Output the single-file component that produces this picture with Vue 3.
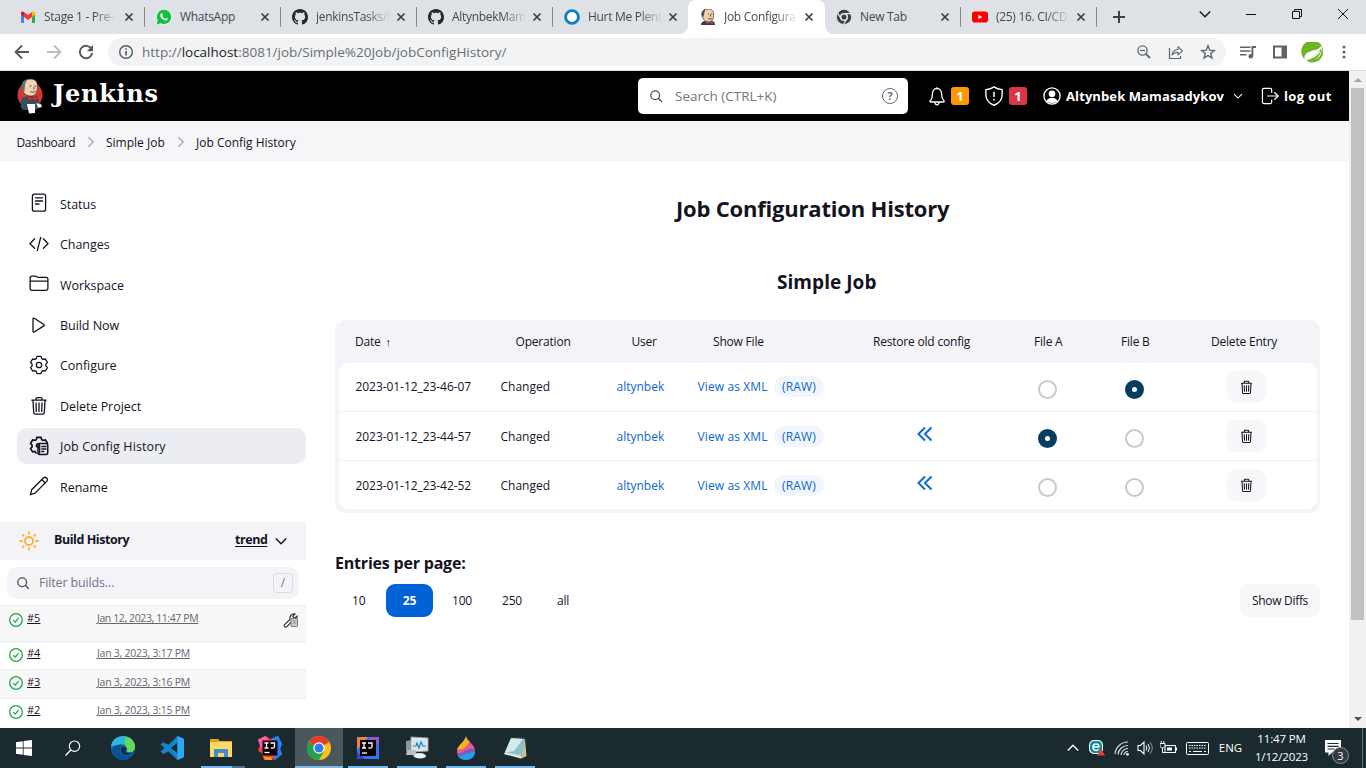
<script setup>
const icons = {
  gmail: '<path d="M1 4v9.2c0 .5.4.8.8.8H4V7z" fill="#4285f4"/><path d="M12 7v7h2.200c.4 0 .8-.3.8-.8V4z" fill="#34a853"/><path d="M4 3v5l4 3 4-3V3L8 6z" fill="#ea4335"/><path d="M1 4v1.500L4 8V3C2.500 2 1 2.500 1 4" fill="#c5221f"/><path d="M12 3v5l3-2.500V4c0-1.500-1.500-2-3-1" fill="#fbbc04"/>',
  whatsapp: '<circle cx="8" cy="8" r="7.800" fill="#fff"/><path d="M.7 15.500l1-4A7.200 7.200 0 1 1 4.600 14.300z" fill="#12c143"/><path d="M5.300 4.200c.7-.5 1 0 1.500 1.500.1.500-.8.900-.6 1.300.6 1.200 1.500 2.100 2.800 2.700.5.200.8-1 1.300-.8 1.800.8 1.700.9 1.300 1.700-1 1.600-3 1.200-5.300-.8C4 8 3.500 5.600 5.300 4.200" fill="#fff"/>',
  github: '<path fill="#24292f" d="M8 0C3.580 0 0 3.580 0 8c0 3.540 2.290 6.530 5.470 7.590.4.070.55-.17.55-.38 0-.19-.01-.82-.01-1.490-2.010.37-2.530-.49-2.690-.94-.09-.23-.48-.94-.82-1.130-.28-.15-.68-.52-.01-.53.63-.01 1.080.58 1.230.82.72 1.210 1.870.87 2.330.66.07-.52.28-.87.51-1.070-1.780-.2-3.640-.89-3.640-3.950 0-.87.31-1.590.82-2.150-.08-.2-.36-1.020.08-2.120 0 0 .67-.21 2.200.82.64-.18 1.320-.27 2-.27s1.360.09 2 .27c1.530-1.040 2.200-.82 2.200-.82.44 1.100.16 1.920.08 2.120.51.56.82 1.270.82 2.150 0 3.070-1.870 3.750-3.650 3.950.29.25.54.73.54 1.480 0 1.070-.01 1.930-.01 2.200 0 .21.15.46.55.38A8 8 0 0 0 16 8c0-4.420-3.580-8-8-8"/>',
  ring: '<circle cx="8" cy="8" r="6.400" fill="#fff" stroke="#0b80c3" stroke-width="2.900"/>',
  butler: '<path d="M1 16c0-3 2-4 5-4h6c2 0 3 2 3 4z" fill="#2d3f55"/><path d="M2 7C1 2 4 0 8 0s6 2 5.500 6.500C13.500 10 12 13 9 13c-4 0-6-3-7-6" fill="#ecd0ae" stroke="#504238" stroke-width=".8"/><path d="M2 7C.8 3 3 .4 6 .5 4 2 4.500 5 3.500 8" fill="#5b534b"/><path d="M8 5h1m2 0h1M8 9.500c2 .8 3 .5 4 0M10.500 5.500v2" stroke="#4b3a30" stroke-width=".9" fill="none"/><path d="M6 12l3 1.500 4-1.500v3l-4-1-3 1z" fill="#d33833"/>',
  chromegray: '<circle cx="8" cy="8" r="7.200" fill="#3c4043"/><circle cx="8" cy="8" r="3.300" fill="#3c4043" stroke="#e8eaed" stroke-width="1.500"/><path d="M8 4.700h6.700M5 9.700L1.800 4.300M10.800 9.700L7.700 15" stroke="#e8eaed" stroke-width="1.200"/>',
  youtube: '<rect x="0" y="2.500" width="16" height="11" rx="2.800" fill="#f00"/><path d="M6.400 5.700v4.600l4-2.300z" fill="#fff"/>',
  x: '<path d="M4.500 4.500l7 7m0-7l-7 7" stroke="#3c4043" stroke-width="1.700"/>',
  plus: '<path d="M8 2v12M2 8h12" stroke="#3c4043" stroke-width="2"/>',
  back: '<path d="M15 8H2M8 1.500L1.500 8 8 14.500" fill="none" stroke="#55585d" stroke-width="1.800"/>',
  fwd: '<path d="M1 8h13M8 1.500L14.500 8 8 14.500" fill="none" stroke="#babcbe" stroke-width="1.800"/>',
  reload: '<path d="M13.600 5.200A6.200 6.200 0 1 0 14.200 9" fill="none" stroke="#55585d" stroke-width="1.900"/><path d="M15 1v6.200H8.800z" fill="#55585d"/>',
  info: '<circle cx="8" cy="8" r="6.300" fill="none" stroke="#55585d" stroke-width="1.400"/><path d="M8 7v4.500M8 4.200v1.600" stroke="#55585d" stroke-width="1.600"/>',
  zoomout: '<circle cx="6.500" cy="6.500" r="4.600" fill="none" stroke="#5f6368" stroke-width="1.300"/><path d="M10 10l4 4" stroke="#5f6368" stroke-width="1.800"/><path d="M4 6.500h5" stroke="#5f6368" stroke-width="1.200"/>',
  share: '<path d="M1.500 4v10.500h11V12" fill="none" stroke="#5f6368" stroke-width="1.200"/><path d="M4 11c.5-3.500 2.500-5.200 6-5.500V2.700l4.500 4.200-4.500 4V8.200C7.500 8.200 5.500 9 4 11z" fill="none" stroke="#5f6368" stroke-width="1.100" stroke-linejoin="round"/>',
  star: '<path d="M8 1.800l1.700 4.400 4.500.3-3.500 2.900 1.200 4.500L8 11.500l-3.900 2.400 1.200-4.500L1.800 6.500l4.500-.3z" fill="none" stroke="#5f6368" stroke-width="1.400"/>',
  queue: '<path d="M0 3.200h10.500M0 7h10.500M0 10.800h6.500" stroke="#5f6368" stroke-width="1.600"/><path d="M12.400 12V3H16" fill="none" stroke="#5f6368" stroke-width="1.900"/><circle cx="10.800" cy="12.200" r="2.300" fill="#5f6368"/>',
  panel: '<path d="M1 1.500h14v13H1z" fill="#5f6368"/><path d="M3 3.500h6.500v9H3z" fill="#fff"/>',
  spring: '<path d="M14.700 2.200A8 8 0 1 0 15.900 9C16.200 6 15.800 4 14.700 2.200" fill="#6db521"/><path d="M14.800 2.500c-2 4-7 3-10.500 5.500C2 10 2 12 3.500 13.400c6 .8 13-1.400 11.300-10.900" fill="#fff"/><path d="M3 12.500C8 12 12 9 14.700 4.500 15 11 9 14.500 4.500 13.700z" fill="#6db521"/><path d="M3 13C8.500 12 11.500 10 13.800 7" stroke="#fff" stroke-width=".8" fill="none"/>',
  dots: '<g fill="#5f6368"><circle cx="8" cy="3" r="1.500"/><circle cx="8" cy="8" r="1.500"/><circle cx="8" cy="13" r="1.500"/></g>',
  down: '<path d="M2.800 5.500L8 10.700l5.200-5.200" fill="none" stroke="currentColor" stroke-width="1.400"/>',
  right: '<path d="M5 2.500L10.500 8 5 13.500" fill="none" stroke="#a8a8b8" stroke-width="1.500"/>',
  min: '<path d="M3 8.500h10" stroke="#111" stroke-width="1"/>',
  restore: '<path d="M3.500 5.500h7v7h-7zM5.500 5.500v-2h7v7h-2" fill="none" stroke="#111"/>',
  close: '<path d="M3 3l10 10m0-10L3 13" stroke="#111"/>',
  search: '<circle cx="7.200" cy="7.200" r="4.400" fill="none" stroke="#4d4d5c" stroke-width="1.300"/><path d="M10.500 10.500l3 3" stroke="#4d4d5c" stroke-width="1.400" stroke-linecap="round"/>',
  bell: '<path d="M3 11.500c.8-1 1.300-1.800 1.300-5C4.300 3.800 5.700 2 8 2s3.700 1.800 3.700 4.500c0 3.200.5 4 1.800 5.200.5.600.2 1.100-.5 1.100H3c-.8 0-1-.6 0-1.300zM6.200 13c.2 1.500 1 2 1.800 2s1.600-.5 1.800-2M8 1v1" fill="none" stroke="#fff" stroke-width="1.050"/>',
  shield: '<path d="M8 .7C6 2.200 4.300 2.700 1.500 2.900V7c0 4 2.200 6.700 6.500 8.400 4.300-1.700 6.500-4.400 6.500-8.400V2.900C11.700 2.700 10 2.200 8 .7z" fill="none" stroke="#fff" stroke-width="1.100"/><path d="M8 4.500v4.200m0 1.500v1.400" stroke="#fff" stroke-width="1.200"/>',
  user: '<circle cx="8" cy="8" r="7.200" fill="#000" stroke="#fff" stroke-width="1.200"/><circle cx="8" cy="6" r="3" fill="#fff"/><path d="M3 12.500c1-2.300 3-2.700 5-2.700s4 .4 5 2.700C10.500 15 5.500 15 3 12.500" fill="#fff"/>',
  logout: '<path d="M9.500 5V2.600c0-.8-.4-1.300-1.200-1.300H2.500c-.8 0-1.200.5-1.200 1.300v10.800c0 .8.4 1.300 1.200 1.300h5.800c.8 0 1.200-.5 1.200-1.300V11M5.500 8H15m-3.200-3.300L15.200 8l-3.400 3.300" fill="none" stroke="#fff" stroke-width="1.100" stroke-linejoin="round"/>',
  status: '<rect x="3.400" y="1.200" width="13.200" height="17" rx="2"/><path d="M6.500 4.800h7M6.500 8h7M6.500 11h3.500"/>',
  code: '<path d="M5.600 4.800L1 9.700l4.600 4.600M14.400 4.800L19 9.700l-4.600 4.600M11.700 3.300L8.300 16.500"/>',
  folder: '<path d="M1.100 14.500V4.100c0-1.200.6-1.900 1.800-1.900h3.300c.7 0 1 .2 1.500.6.6.5 1 .6 1.700.6h7.800c1.100 0 1.700.6 1.700 1.700v9.400c0 1.200-.6 1.800-1.800 1.800H3c-1.200 0-1.900-.6-1.900-1.800zM1.300 7.100h17.500"/>',
  play: '<path d="M4 4v12.300c0 .8.700 1.100 1.300.7l9.500-6.100c.6-.4.6-1 0-1.400L5.300 3.300C4.700 2.900 4 3.200 4 4z"/>',
  gear: '<path d="M8 1.400h4l.8 2.200 1.300.8 2.300-.4 2 3.400-1.500 1.800v1.600l1.500 1.800-2 3.400-2.300-.4-1.300.8-.8 2.200H8l-.8-2.200-1.300-.8-2.300.4-2-3.400 1.500-1.800V9.200L1.600 7.400l2-3.400 2.300.4 1.300-.8z" stroke-linejoin="round"/><circle cx="10" cy="10" r="2.700"/>',
  trash: '<path d="M2.800 4.200h14.400M7 4V2.600c0-.6.400-1 1-1h4c.6 0 1 .4 1 1V4M4 4.400l.7 12.200c.1 1 .7 1.500 1.500 1.500h7.600c.8 0 1.400-.5 1.500-1.500L16 4.400M7 7l.3 8.500M10 7v8.500M13 7l-.3 8.500"/>',
  confhist: '<path d="M7 17l-1-1.500-2.400.4-2-3.300 1.500-1.800V9.200L1.600 7.400l2-3.400 2.300.4 1.300-.8L8 1.400h4l.8 2.200 1.300.8 2.300-.4 2 3" stroke-width="1.700"/><rect x="9" y="7.500" width="9.700" height="11" rx="1.500" stroke-width="1.600"/><path d="M10.600 17V9.300c0-2.300-3.300-2-3.300.2 0 1.400 1.200 1.700 2 1.500M12.800 10.500h4M12.800 13h4M12.800 15.500h2" stroke-width="1.400"/>',
  pencil: '<path d="M1.500 18.500l1.200-4.800L14.400 2c2.300-2 5.200.9 3.300 3.400L6 17.200zM12.800 3.500l3.500 3.500"/>',
  sun: '<circle cx="10" cy="10" r="4"/><path d="M10 .5v3m0 13v3M.5 10h3m13 0h3M3.300 3.300l2 2m9.400 9.400l2 2m0-13.400l-2 2m-9.400 9.400l-2 2"/>',
  check: '<circle cx="8" cy="8" r="6.300" fill="none" stroke="#1ea64b" stroke-width="1.300"/><path d="M5.400 8.200l1.900 1.900 3.300-4" fill="none" stroke="#1ea64b" stroke-width="1.300"/>',
  wrench: '<path d="M1.500 14.500c-1-1 0-2 .8-2.600L7 7.500C6.300 4 8.500 1.500 12 2L9.800 4.300l1.700 1.900 2.500-2c.5 3-1.700 5.200-4.700 4.800l-5.200 5.400c-.8.900-1.800 1-2.600.1z" fill="#fff" stroke="#333" stroke-width="1.200"/><rect x="8" y="6.500" width="6.500" height="8" rx="1" fill="#ccc" stroke="#777"/><path d="M9.800 9h3M9.800 11h3" stroke="#777" stroke-width=".8"/>',
  rewind: '<path d="M8 1.500L1.500 8 8 14.500M14.500 1.500L8 8l6.500 6.500" fill="none" stroke="#0b6bdb" stroke-width="2"/>',
  win: '<path d="M0 2.200L6.800 1.200v6.400H0zM7.600 1.100L16 0v7.600H7.600zM0 8.400h6.800v6.400L0 13.800zM7.600 8.400H16V16l-8.400-1.100z" fill="#fff"/>',
  tsearch: '<circle cx="9.500" cy="6.200" r="5.200" fill="none" stroke="#fff" stroke-width="1.200"/><path d="M5.800 10L.5 15.500" stroke="#fff" stroke-width="1.300"/>',
  edge: '<circle cx="12" cy="12" r="12" fill="#0c61ad"/><path d="M0 11C1-3 23-4 24 11c0 5-5 6.500-8.500 4.300 2-2.300.5-6.800-4-6.800C6 8.500 1 10 0 11" fill="#2bbbd8"/><path d="M15 .4C21 2 24 6 24 11c0 4.500-4.500 6-8 4.500 1-2 0-4.500-1.500-5.500C13 7 14 3 15 .4" fill="#64d959"/><path d="M9 12c-2 6 4 10 12 7C15 27 3 25 1.500 15 2 10 7 8 11 9c-1 .7-1.500 1.500-2 3" fill="#0a4f98"/><path d="M10 13c0-3 5-3 5.300 0 0 1.500-1.300 2-.8 3 1.200 1.400 5 1.600 7.500.2-2 3.300-12 4.800-12-3.200" fill="#1b2a2f"/>',
  vscode: '<path fill-rule="evenodd" d="M17.500 0L24 3v18l-6.500 3L8.500 15.500 3.200 18 .4 15.400 4.500 12 .4 8.500 3.200 6.200 8.500 8.800zM17.500 6.700L11 12l6.500 5.300z" fill="#1585ca"/><path d="M17.500 0L24 3v18l-6.500 3z" fill="#2ba9f5"/>',
  explorer: '<path d="M1 3h8l2 2h12v16H1z" fill="#e3a21a"/><rect x="1" y="6" width="22" height="15" fill="#ffd765"/><path d="M5 21v-8h14v8h-4v-4h-6v4z" fill="#3f8fd0"/>',
  ij: '<path d="M0 3L8 0 12 3l8-3 4 8-2 5 2 5-7 6-5-3-6 3-2-7-4-2 2-6z" fill="#f1433f"/><path d="M13 3l7-3 4 8-2 5 2 5-7 6z" fill="#1587ff"/><path d="M3 15l4 6 6 0 2 3-8 0z" fill="#ff9419"/><path d="M0 4l7-4 3 3-7 9z" fill="#fc5fa3"/><rect x="4.500" y="4.500" width="15" height="15" fill="#0a0006"/><path d="M6.500 7h4m-2 0v5m-2 0h4M12.500 7h4v3.700c0 1.500-2.300 1.800-3.500.7" fill="none" stroke="#fff" stroke-width="1.300"/><path d="M6.500 16.500h5" stroke="#fff" stroke-width="1.300"/>',
  chrome: '<circle cx="12" cy="12" r="12" fill="#fbc116"/><path d="M12 12L1.600 6A12 12 0 0 1 22.400 6z" fill="#e33b2e"/><path d="M1.600 6A12 12 0 0 0 12 24l5.200-9L12 12z" fill="#27a04b"/><circle cx="12" cy="12" r="5.700" fill="#fff"/><circle cx="12" cy="12" r="4.500" fill="#317bf0"/>',
  ij2: '<rect x="1" y="1" width="22" height="22" fill="#2f75ee"/><path d="M1 1h11L1 14z" fill="#f2803c"/><path d="M12 1h11v8z" fill="#a051d8"/><path d="M1 6v10l8 7H1z" fill="#3b43c9"/><rect x="4" y="4" width="16" height="16" fill="#0a0006"/><path d="M6 7h4m-2 0v5m-2 0h4M12 7h4v3.700c0 1.500-2.300 1.800-3.500.7" fill="none" stroke="#fff" stroke-width="1.300"/><path d="M6 17h5" stroke="#fff" stroke-width="1.300"/>',
  monitor: '<path d="M1 5l6-1v12l-6-1z" fill="#8d9699"/><path d="M6 1l17 1v13l-17 1z" fill="#e8eaea" stroke="#9aa2a6"/><path d="M8 3.500l13 .5v9l-13 .7z" fill="#cfe5f2"/><path d="M8 10h3l1-3 2 5 2-6 2 4h3" fill="none" stroke="#2783be" stroke-width="1.200"/><path d="M2 14h9v3h7l2 4H9l-1-2H1z" fill="#b9bfc2"/><ellipse cx="15" cy="20" rx="6" ry="2.500" fill="#f0f1f1"/>',
  drop: '<path d="M12 0c1 6 9 9 9 16 0 11-18 11-18 0C3 9 10 7 12 0" fill="#6e57bd"/><path d="M12 0c-2 7-8 9-9 14 6 3 11-5 13-8-2-2-4-4-4-6" fill="#f9b219"/><path d="M3.300 13c6 2 10-3 12-7.200 3 2 5 5 5.500 8C15 13 12 19 3 17z" fill="#f1568f"/><path d="M3.200 17.500c3 .8 6-2 9-3.500 3-1.500 6-1.500 8.700-.2.100.7.100 1.500.1 2.200-5 0-9 4-16.500 4.500-.7-.9-1.100-1.900-1.300-3" fill="#7a5cc4"/><path d="M4 20c6 0 11-4.500 17-4-1 8.500-12 10-17 4" fill="#20a0e8"/>',
  notepad: '<path d="M22 3l1.500 17-4 2-2-4z" fill="#cdbf95"/><path d="M8 2l14 1-4 18-17-3z" fill="#8cc0cb"/><path d="M8 2l12 1-9 12-9 1.500z" fill="#d3ebef"/><path d="M1 18l2-1.500 15 3 1.500 2.500-2 .5z" fill="#e9e6d8"/><path d="M8 2h14" stroke="#667" stroke-dasharray="1 1"/>',
  eset: '<rect x="0" y="0" width="14" height="14" rx="5" fill="#fff"/><rect x="1" y="1" width="12" height="12" rx="4.500" fill="#0b8c96"/><path d="M4 7h6c0-4-6-4-6 0s4 4 5.500 2.300" fill="none" stroke="#fff" stroke-width="1.500"/><path d="M12 8.500l4 7H8z" fill="#e83b3b"/>',
  wifi: '<g fill="none" stroke="#d7dcdd" stroke-width="1.200"><path d="M1 14A13 13 0 0 1 14 2M4 14.500A10 10 0 0 1 14 5.500M7 15a7 7 0 0 1 7-6.500M10 15a4 4 0 0 1 4-3.500"/></g><circle cx="13.500" cy="14.300" r="1.400" fill="#fff"/>',
  speaker: '<path d="M1 5.500h2.500L7 2v12l-3.500-3.500H1z" fill="none" stroke="#fff" stroke-width="1.100"/><path d="M9 5.500q1.700 2.500 0 5M11 3.800q3 4.200 0 8.400" fill="none" stroke="#fff"/><path d="M13.200 2q4.200 6 0 12" fill="none" stroke="#899398"/>',
  battery: '<path d="M5 5.500h10.500v7H5zM16.500 7.500v3" fill="none" stroke="#fff" stroke-width="1.100"/><rect x="7" y="7.500" width="5" height="3" fill="#fff"/><path d="M0 3.500h5V6c0 2.500-5 2.500-5 0zM1.200 1v2.500M3.800 1v2.500M2.500 8v4.500H5" fill="#1b2a2f" stroke="#fff"/>',
  keyboard: '<rect x=".5" y="2.500" width="22" height="12" rx="1" fill="none" stroke="#fff"/><path d="M3 5.500h17M3 8h17" stroke="#fff" stroke-dasharray="1.500 1" stroke-width="1.200"/><path d="M3 11.500h2m2 0h9m2 0h2" stroke="#fff" stroke-width="1.200"/>',
  note: '<path d="M0 0h16v12.500H7L3.500 16v-3.500H0z" fill="#fff"/><path d="M2.500 3.500h11M2.500 6.300h11M2.500 9h7" stroke="#1b2a2f" stroke-width="1.200"/>',
}
const tabs = [
  ['gmail', 'Stage 1 - Pre-'],
  ['whatsapp', 'WhatsApp'],
  ['github', 'jenkinsTasks/b'],
  ['github', 'AltynbekMam'],
  ['ring', 'Hurt Me Plent'],
  ['butler', 'Job Configura'],
  ['chromegray', 'New Tab'],
  ['youtube', '(25) 16. CI/CD'],
].map(([icon, label], i) => ({ icon, label, active: i === 5, line: i !== 4 && i !== 5, fade: i !== 1 && i !== 6 }))
const menu = [
  ['status', 'Status'], ['code', 'Changes'], ['folder', 'Workspace'], ['play', 'Build Now'],
  ['gear', 'Configure'], ['trash', 'Delete Project'], ['confhist', 'Job Config History'], ['pencil', 'Rename'],
]
const builds = [
  ['#5', 'Jan 12, 2023, 11:47 PM'], ['#4', 'Jan 3, 2023, 3:17 PM'],
  ['#3', 'Jan 3, 2023, 3:16 PM'], ['#2', 'Jan 3, 2023, 3:15 PM'],
]
const rows = [
  { date: '2023-01-12_23-46-07', restore: false, a: false, b: true },
  { date: '2023-01-12_23-44-57', restore: true, a: true, b: false },
  { date: '2023-01-12_23-42-52', restore: true, a: false, b: false },
]
const heads = ['Date', 'Operation', 'User', 'Show File', 'Restore old config', 'File A', 'File B', 'Delete Entry']
const apps = [
  ['win', 'small'], ['tsearch', 'small'], ['edge', ''], ['vscode', ''], ['explorer', 'open multi'], ['ij', ''],
  ['chrome', 'current'], ['ij2', 'open'], ['monitor', 'open'], ['drop', 'open'], ['notepad', 'open'],
]
</script>

<template>
  <div class="screen">
    <div class="tabstrip">
      <div v-for="t in tabs" :key="t.label" class="tab" :class="{ active: t.active, line: t.line }">
        <svg class="i16" viewBox="0 0 16 16" v-html="icons[t.icon]" />
        <span class="tab-label" :class="{ fade: t.fade }">{{ t.label }}</span>
        <svg class="i16" viewBox="0 0 16 16" v-html="icons.x" />
      </div>
      <svg class="i16 plus" viewBox="0 0 16 16" v-html="icons.plus" />
      <div class="winctl">
        <svg class="i16" viewBox="0 0 16 16" v-html="icons.down" />
        <svg class="i16" viewBox="0 0 16 16" v-html="icons.min" />
        <svg class="i16" viewBox="0 0 16 16" v-html="icons.restore" />
        <svg class="i16" viewBox="0 0 16 16" v-html="icons.close" />
      </div>
    </div>

    <div class="toolbar">
      <svg class="i16" viewBox="0 0 16 16" v-html="icons.back" />
      <svg class="i16" viewBox="0 0 16 16" v-html="icons.fwd" />
      <svg class="i16" viewBox="0 0 16 16" v-html="icons.reload" />
      <div class="omnibox">
        <svg class="i16" viewBox="0 0 16 16" v-html="icons.info" />
        <span class="url">http://<b>localhost</b>:8081/job/Simple%20Job/jobConfigHistory/</span>
        <svg class="i16" viewBox="0 0 16 16" v-html="icons.zoomout" />
        <svg class="i16" viewBox="0 0 16 16" v-html="icons.share" />
        <svg class="i16" viewBox="0 0 16 16" v-html="icons.star" />
      </div>
      <div class="exts">
        <svg class="i16" viewBox="0 0 16 16" v-html="icons.queue" />
        <svg class="i16" viewBox="0 0 16 16" v-html="icons.panel" />
        <svg class="i22" viewBox="0 0 16 16" v-html="icons.spring" />
        <svg class="i16" viewBox="0 0 16 16" v-html="icons.dots" />
      </div>
    </div>

    <div class="viewport">
      <div class="page">
        <header class="head">
          <svg class="mascot" viewBox="0 0 26 36">
            <ellipse cx="13" cy="17" rx="12.500" ry="13" fill="#d33833" />
            <path d="M4 30c0-5-1-9 3-11l7-1 7 2 2 9-4 3H6z" fill="#335061" />
            <path d="M5 11C4 4.500 8 1 13.500 1c5.500 0 7.500 4 7 8.500-.3 5.500-3 8.500-6 8.500-5 0-8.500-2.500-9.500-7" fill="#f0d6b7" stroke="#49372d" stroke-width=".7" />
            <path d="M5 13C3 6 6 1.500 11 1.500 8 3 8 8 7.500 14z" fill="#6d6b6d" />
            <path d="M12.500 8h2m3 0h2M13 13.500c2 1 4 .8 5.500-.2M17 9v2.500" stroke="#49372d" stroke-width=".9" fill="none" />
            <path d="M11 18l4 2 5-2v5l-5-2-4 2z" fill="#d33833" stroke="#81140f" stroke-width=".5" />
            <path d="M10 26l8 0 0 9-6 .5z" fill="#fff" /><path d="M19 25l5 1 1 3-4 1z" fill="#fff" stroke="#555" stroke-width=".4" />
          </svg>
          <span class="brand">Jenkins</span>
          <div class="search">
            <svg class="i16" viewBox="0 0 16 16" v-html="icons.search" />
            <span>Search (CTRL+K)</span>
            <i class="help">?</i>
          </div>
          <div class="account">
            <svg class="bell" viewBox="0 0 16 16" v-html="icons.bell" />
            <em class="badge amber">1</em>
            <svg class="shield" viewBox="0 0 16 16" v-html="icons.shield" />
            <em class="badge red">1</em>
            <svg class="person" viewBox="0 0 16 16" v-html="icons.user" />
            <strong class="uname">Altynbek Mamasadykov</strong>
            <svg class="caret" viewBox="0 0 16 16" v-html="icons.down" />
            <svg class="exit" viewBox="0 0 16 16" v-html="icons.logout" />
            <strong class="out">log out</strong>
          </div>
        </header>

        <nav class="crumbs">
          <span class="c1">Dashboard</span>
          <svg class="i14" viewBox="0 0 16 16" v-html="icons.right" />
          <span class="c2">Simple Job</span>
          <svg class="i14" viewBox="0 0 16 16" v-html="icons.right" />
          <span class="c3">Job Config History</span>
        </nav>

        <div class="body">
          <aside class="side">
            <div class="menu">
              <div v-for="(m, i) in menu" :key="m[1]" class="item" :class="{ on: i === 6 }">
                <svg class="mi" viewBox="0 0 20 20" v-html="icons[m[0]]" />
                <span>{{ m[1] }}</span>
              </div>
            </div>
            <div class="bh">
              <svg class="sun" viewBox="0 0 20 20" v-html="icons.sun" />
              <strong>Build History</strong>
              <u>trend</u>
              <svg class="i16" viewBox="0 0 16 16" v-html="icons.down" />
            </div>
            <div class="filter">
              <svg class="i16" viewBox="0 0 16 16" v-html="icons.search" />
              <span>Filter builds...</span>
              <kbd>/</kbd>
            </div>
            <div class="builds">
              <div v-for="(b, i) in builds" :key="b[0]" class="build" :class="'b' + i">
                <svg class="i16 ok" viewBox="0 0 16 16" v-html="icons.check" />
                <u class="num">{{ b[0] }}</u>
                <u class="when">{{ b[1] }}</u>
                <svg v-if="i === 0" class="i16 tool" viewBox="0 0 16 16" v-html="icons.wrench" />
              </div>
            </div>
          </aside>

          <main class="main">
            <h1>Job Configuration History</h1>
            <h2>Simple Job</h2>
            <div class="table">
              <div class="row thead">
                <span v-for="(h, i) in heads" :key="h" :class="'h' + i">{{ h }}<small v-if="i === 0">↑</small></span>
              </div>
              <div class="tbody">
                <div v-for="r in rows" :key="r.date" class="row">
                  <span class="date">{{ r.date }}</span>
                  <span class="op">Changed</span>
                  <a class="usr">altynbek</a>
                  <div class="files"><a>View as XML</a><a class="raw">(RAW)</a></div>
                  <div class="restore"><svg v-if="r.restore" viewBox="0 0 16 16" v-html="icons.rewind" /></div>
                  <i class="radio" :class="{ on: r.a }" />
                  <i class="radio" :class="{ on: r.b }" />
                  <div class="del"><svg viewBox="0 0 20 20" v-html="icons.trash" /></div>
                </div>
              </div>
            </div>
            <h3>Entries per page:</h3>
            <div class="pager">
              <span class="p0">10</span><b>25</b><span class="p1">100</span><span class="p2">250</span><span class="p3">all</span>
              <button>Show Diffs</button>
            </div>
          </main>
        </div>
      </div>
      <div class="scroll">
        <i class="up" />
        <div class="thumb" />
        <i class="dn" />
      </div>
    </div>

    <footer class="taskbar">
      <div v-for="a in apps" :key="a[0]" class="app" :class="[a[0], a[1]]">
        <svg :class="a[1] === 'small' ? 'i16' : 'i24'" :viewBox="a[1] === 'small' ? '0 0 16 16' : '0 0 24 24'" v-html="icons[a[0]]" />
      </div>
      <div class="tray">
        <div class="t24"><svg class="i16 flip" viewBox="0 0 16 16" v-html="icons.down" /></div>
        <div class="t24"><svg class="i16" viewBox="0 0 16 16" v-html="icons.eset" /></div>
        <div class="t25"><svg class="i16" viewBox="0 0 16 16" v-html="icons.wifi" /></div>
        <div class="t21"><svg class="i16" viewBox="0 0 16 16" v-html="icons.speaker" /></div>
        <div class="t27"><svg class="i17" viewBox="0 0 17 16" v-html="icons.battery" /></div>
        <div class="t30"><svg class="kb" viewBox="0 0 23 17" v-html="icons.keyboard" /></div>
        <div class="lang">ENG</div>
        <div class="clock"><span class="time">11:47 PM</span><span class="day">1/12/2023</span></div>
        <div class="notif"><svg class="i16" viewBox="0 0 16 16" v-html="icons.note" /><em>3</em></div>
      </div>
    </footer>
  </div>
</template>

<style>
body { margin: 0; overflow: hidden; }
</style>

<style scoped>
* { box-sizing: border-box; }
svg { flex: none; display: block; }
.screen { width: 1366px; height: 768px; display: flex; flex-direction: column; overflow: hidden; background: #fff; font-family: "Open Sans", "Noto Sans", sans-serif; font-size: 12px; color: #14141f; white-space: nowrap; }
.i14 { width: 14px; height: 14px; }
.i16 { width: 16px; height: 16px; }
.i17 { width: 17px; height: 16px; }
.i22 { width: 22px; height: 22px; }
.i24 { width: 24px; height: 24px; }

.tabstrip { height: 34px; flex: none; background: #dee1e6; display: flex; align-items: center; padding-left: 8px; }
.tab { width: 136px; height: 34px; display: flex; align-items: center; padding-left: 12px; position: relative; }
.tab.line::after { content: ""; position: absolute; right: -1px; top: 7px; width: 1px; height: 20px; background: #85888d; }
.tab.active { background: #fff; border-radius: 8px 8px 0 0; width: 137px; margin-right: -1px; }
.tab.active::before, .tab.active::after { content: ""; position: absolute; bottom: 0; width: 8px; height: 8px; }
.tab.active::before { left: -8px; background: radial-gradient(circle at 0 0, transparent 7.5px, #fff 8px); }
.tab.active::after { right: -8px; background: radial-gradient(circle at 100% 0, transparent 7.5px, #fff 8px); }
.tab-label { width: 77px; margin: 0 0 0 8px; line-height: 18px; color: #45494d; font-size: 12px; letter-spacing: -0.3px; }
.tab-label.fade { mask-image: linear-gradient(to right, #000 65%, transparent 97%); }
.plus { margin-left: 15px; }
.winctl { display: flex; gap: 30px; margin-left: 70px; margin-top: -6px; }

.toolbar { height: 37px; flex: none; display: flex; align-items: center; padding-left: 14px; border-bottom: 1px solid #dadce0; background: #fff; gap: 16px; }
.omnibox { width: 1118px; height: 28px; border-radius: 14px; background: #f1f3f4; display: flex; align-items: center; padding: 0 10px; margin-left: -2px; gap: 16px; }
.omnibox .url { flex: 1; margin-left: -8px; font-size: 13.5px; color: #6a6e73; }
.omnibox .url b { font-weight: 400; color: #202124; }
.exts { display: flex; align-items: center; gap: 16px; margin-left: -2px; }
.exts .i22 { margin: 1px -3px 0; }

.viewport { height: 657px; flex: none; display: flex; }
.page { width: 1349px; overflow: hidden; }
.head { height: 50px; background: #000; display: flex; align-items: center; padding-left: 17px; color: #fff; }
.mascot { width: 26px; height: 36px; }
.brand { font-family: "DejaVu Serif", serif; font-weight: 700; font-size: 24px; letter-spacing: 0.7px; line-height: 30px; margin: -4px 0 0 10px; width: 585px; }
.search { width: 270px; height: 36px; border-radius: 5px; background: #fff; display: flex; align-items: center; padding: 0 10px; color: #757575; font-size: 13.5px; }
.search span { flex: 1; margin-left: 11px; }
.help { width: 16px; height: 16px; border: 1.500px solid #6a6a80; border-radius: 50%; color: #6a6a80; font: 700 11px/13px "Open Sans", sans-serif; text-align: center; }
.account { display: flex; align-items: center; flex: 1; padding-left: 19px; }
.bell { width: 20px; height: 20px; }
.shield { width: 20px; height: 20px; margin-left: 15px; }
.badge { width: 18px; height: 18px; border-radius: 3px; font: 700 13px/18px "Open Sans", sans-serif; text-align: center; margin-left: 4px; }
.amber { background: #ff9800; }
.red { background: #dc3545; margin-left: 5px; }
.person { width: 18px; height: 18px; margin-left: 16px; }
.uname { width: 160px; margin-left: 5px; font-size: 13px; letter-spacing: 0.1px; }
.caret { width: 12px; height: 12px; margin-left: 6px; }
.exit { width: 18px; height: 18px; margin-left: 17px; }
.out { margin-left: 5px; font-size: 13px; letter-spacing: 0.4px; }

.crumbs { height: 41px; background: #f6f6f9; display: flex; align-items: center; padding: 2px 0 0 16.500px; }
.crumbs span { line-height: 18px; }
.crumbs svg { margin-top: -1px; }
.c1 { width: 67.500px; letter-spacing: -0.35px; } .c2 { margin-left: 8px; width: 68px; } .c3 { margin-left: 8px; }

.body { display: flex; height: 566px; }
.side { width: 306px; flex: none; padding-top: 23.400px; }
.menu { display: flex; flex-direction: column; gap: 4.430px; padding-left: 17px; height: 336.600px; }
.item { height: 36px; flex: none; border-radius: 10px; display: flex; align-items: center; padding-left: 12px; font-size: 12.5px; letter-spacing: -0.05px; }
.item span { margin: 2.800px 0 0 11px; line-height: 18px; }
.item.on { background: #ecedf3; letter-spacing: 0.1px; }
.mi { width: 20px; height: 20px; fill: none; stroke: #14141f; stroke-width: 1.300; stroke-linecap: round; }
.bh { height: 38px; background: #f3f3f8; display: flex; align-items: center; padding-left: 19px; font-size: 12.5px; }
.bh strong, .bh u { font-weight: 700; margin-top: -3px; letter-spacing: -0.45px; }
.sun { width: 20px; height: 20px; fill: none; stroke: #fbb22f; stroke-width: 1.800; }
.bh strong { width: 181px; margin-left: 15px; }
.bh u { width: 32px; text-underline-offset: 2px; }
.bh .i16 { margin-left: 6px; }
.filter { margin: 7px 7px 6px; width: 292px; height: 32px; border-radius: 10px; background: #f3f3f8; display: flex; align-items: center; padding: 0 6px 0 8px; color: #73738c; font-size: 12.5px; }
.filter span { flex: 1; margin-left: 8px; letter-spacing: -0.15px; }
.filter kbd { width: 20px; height: 20px; border: 1px solid #dcdce6; border-radius: 4px; font: 12px/18px "Open Sans", sans-serif; text-align: center; }
.build { display: flex; height: 28px; border-top: 1px solid #ececef; padding: 5px 0 0 8px; line-height: 15px; }
.build.b0 { height: 36px; background: #f8f8f8; padding-top: 6px; }
.build.b2 { height: 29px; background: #f8f8f8; padding-top: 6px; }
.build .ok { margin-top: 0; }
.b2 .ok { margin-top: -1px; }
.num { width: 69px; margin-left: 3px; font-size: 11px; text-underline-offset: 1px; margin-top: -2px; }
.when { width: 186px; font-size: 10.500px; color: #666670; text-underline-offset: 1px; margin-top: -1px; letter-spacing: -0.25px; }
.b0 .when { letter-spacing: -0.4px; }
.build u + u { margin-left: 1px; }

.main { margin-left: 29px; width: 985px; padding-top: 27px; }
h1, h2, h3 { margin: 0; font-weight: 700; }
h1 { padding-left: 341px; font-size: 22px; line-height: 38px; letter-spacing: -0.2px; }
h2 { padding-left: 442px; font-size: 19px; line-height: 30px; margin-top: 40px; letter-spacing: 0.05px; }
.table { height: 193px; margin-top: 23px; border-radius: 10px; background: #f3f3f8; padding: 0 3px 0 4px; }
.row { display: grid; grid-template-columns: 145px 116px 81px 176px 161px 87px 90px 1fr; align-items: center; padding-left: 16px; }
.thead { height: 43px; letter-spacing: -0.2px; }
.thead small { font-size: 11px; line-height: 12px; margin-left: 5px; }
.h1, .h2 { padding-left: 15.500px; }
.h3 { padding-left: 16px; }
.tbody { border-radius: 10px; overflow: hidden; display: flex; flex-direction: column; gap: 1px; }
.tbody .row { height: 48px; background: #fff; border-radius: 3px; }
.tbody .row:first-child > span, .tbody .row:first-child > a, .tbody .row:first-child > .files { margin-top: -1px; }
.tbody .date { letter-spacing: -0.06px; padding-left: 0.500px; }
.tbody .op, .tbody .usr { padding-left: 0.500px; }
.tbody a { color: #0b66d8; }
.files { display: flex; align-items: center; }
.files > a:first-child { width: 77px; letter-spacing: 0.12px; padding-left: 0.500px; }
.raw { width: 50px; height: 21px; border-radius: 11px; background: #f1f6fc; text-align: center; line-height: 21px; letter-spacing: 0.2px; }
.restore { padding-left: 44px; margin-top: -5px; }
.restore svg { width: 16px; height: 16px; }
.radio { width: 19px; height: 19px; border-radius: 50%; border: 2px solid #c3cbd1; margin: 5px 0 0 3.500px; }
.radio.on { border: 7px solid #063c5f; }
.del { width: 39px; height: 32px; border-radius: 9px; background: #f7f7fa; margin-left: 16px; display: flex; align-items: center; justify-content: center; }
.del svg { width: 15px; height: 15px; fill: none; stroke: #14141f; stroke-width: 1.400; }
h3 { font-size: 16px; line-height: 24px; margin-top: 38px; letter-spacing: -0.2px; }
.pager { display: flex; height: 33px; align-items: center; margin-top: 9px; letter-spacing: -0.2px; }
.pager b { width: 47px; height: 33px; border-radius: 9px; background: #0062d6; color: #fff; text-align: center; line-height: 33px; margin-right: 19px; }
.p0 { width: 34px; margin-left: 17px; } .p1 { width: 50px; } .p2 { width: 55px; } .p3 { flex: 1; }
.pager button { width: 80px; height: 33px; border: 0; border-radius: 9px; background: #f7f7fa; font: 12px "Open Sans", sans-serif; color: #14141f; padding: 0; letter-spacing: -0.3px; }

.scroll { width: 17px; background: #f1f1f1; display: flex; flex-direction: column; align-items: center; }
.up, .dn { width: 0; height: 0; border: 4px solid transparent; }
.up { border-bottom-color: #a3a3a3; border-top: 0; margin-top: 7px; }
.thumb { width: 13px; height: 532px; background: #c1c1c1; margin-top: 6px; }
.dn { border-top-color: #505050; border-bottom: 0; margin-top: 97px; }

.taskbar { height: 40px; flex: none; background: #1b2a2f; display: flex; color: #fff; }
.app { width: 48px; margin-right: 1px; height: 40px; display: flex; align-items: center; justify-content: center; position: relative; }
.edge { margin-left: 1px; }
.current { background: #4a575b; border-bottom: 2px solid #76b9ed; padding-top: 2px; }
.open::after { content: ""; position: absolute; left: 4px; right: 4px; bottom: 0; height: 2px; background: #76b9ed; }
.multi::after { left: 4px; right: 0; background: linear-gradient(to right, #76b9ed 31px, #4d7591 31px); }
.tray { display: flex; margin-left: 521px; align-items: center; }
.tray > div { height: 40px; display: flex; align-items: center; justify-content: center; }
.t24 { width: 24px; } .t25 { width: 25px; } .t21 { width: 21px; } .t27 { width: 27px; } .t30 { width: 30px; }
.kb { width: 23px; height: 17px; }
.flip { transform: rotate(180deg); }
.tray .lang { width: 37px; font-size: 11.500px; padding-bottom: 1px; }
.tray .clock { width: 65px; flex-direction: column; line-height: 18px; font-size: 11.500px; padding-bottom: 1px; letter-spacing: -0.15px; }
.tray .notif { width: 49px; border-right: 1px solid #69757a; position: relative; justify-content: flex-start; padding-left: 11px; }
.notif em { position: absolute; left: 18px; top: 19px; width: 17px; height: 17px; border-radius: 50%; border: 1px solid #8a9397; background: #333b3e; font: 11px/15px "Open Sans", sans-serif; text-align: center; }
</style>
